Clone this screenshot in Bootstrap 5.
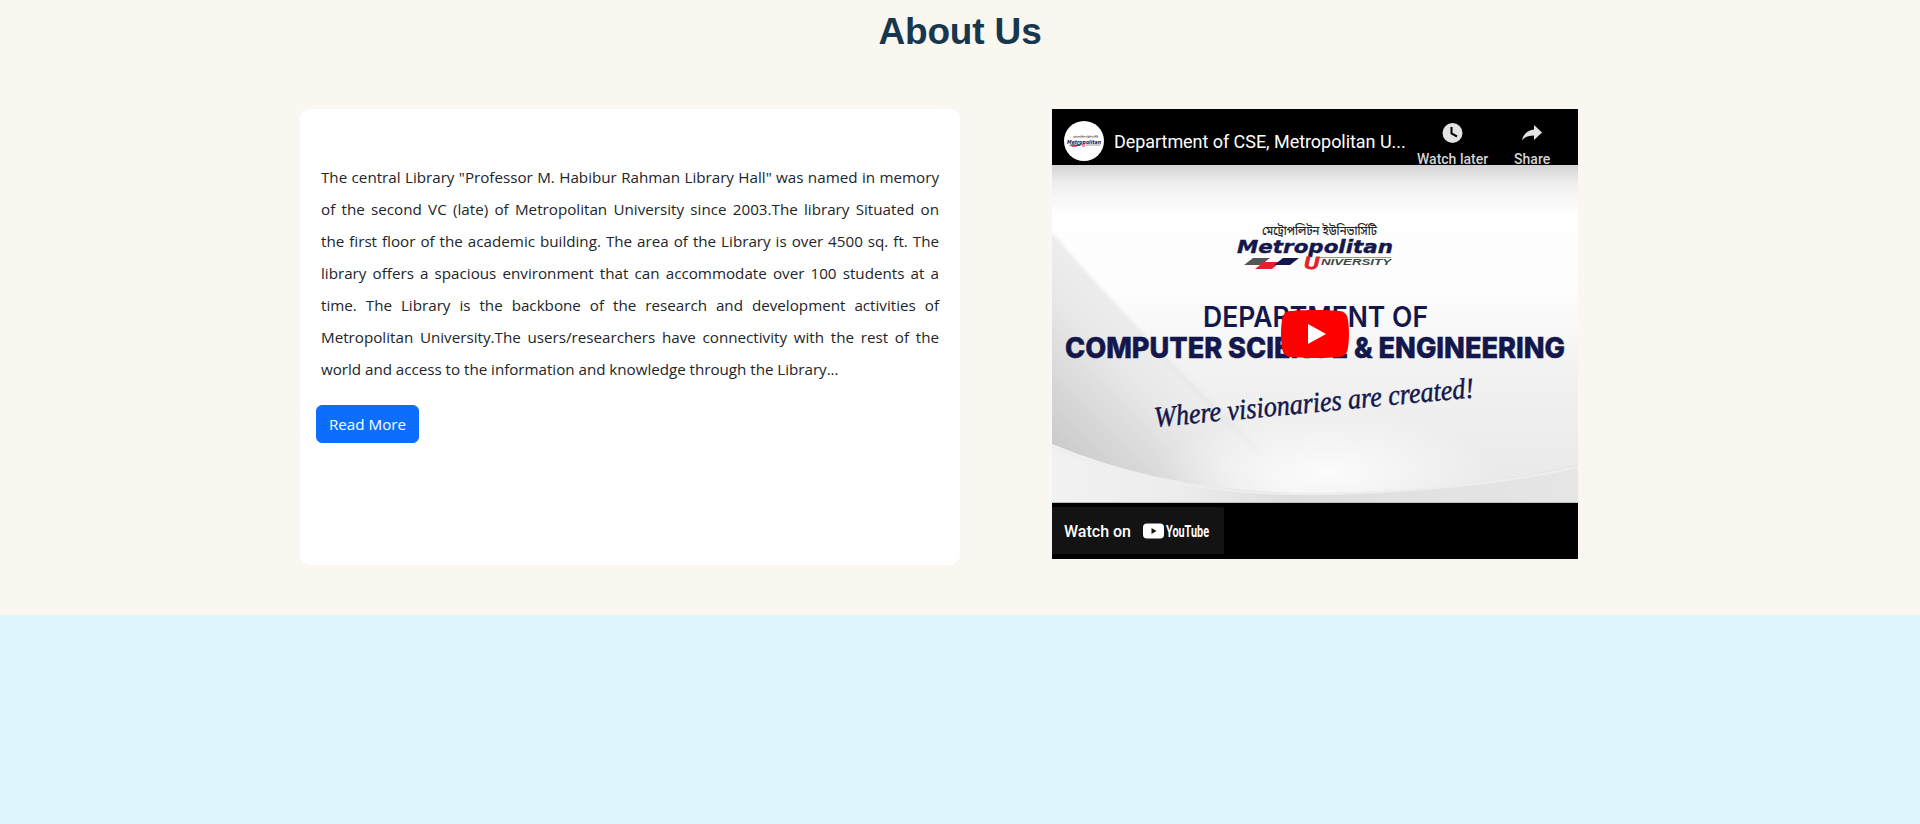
<!DOCTYPE html>
<html lang="en">
<head>
<meta charset="utf-8">
<meta name="viewport" content="width=device-width, initial-scale=1">
<title>About Us</title>
<link href="https://cdn.jsdelivr.net/npm/bootstrap@5.3.0/dist/css/bootstrap.min.css" rel="stylesheet">
<style>
body{background:#dff6ff;font-family:"Open Sans","Noto Sans",sans-serif;overflow:hidden}
.about{background:#faf7f0;height:615px}
.about h1{font:bold 37px/44px "Liberation Sans",Arial,sans-serif;letter-spacing:-.15px;color:#17374f;padding-top:10px;margin-bottom:55px}
.about-row{padding-left:300px;gap:92px}
.about-card{width:660px;height:456px;border-radius:10px;padding:52px 21px 0}
.about-card p{font-size:15.2px;line-height:32px;color:#212529;margin:0 0 20px}
.about-card p span{display:block;white-space:nowrap;text-align-last:justify}
.about-card p span:last-child{width:517px;letter-spacing:-.03px}
.about-card .btn{width:103px;height:38px;margin-left:-5px;font-size:15.2px;padding:7px 0}
.player{width:526px;height:450px;background:#000;font-family:Roboto,sans-serif;color:#eee}
.player-top{height:56px;overflow:hidden;padding-left:12px}
.avatar{margin-top:12px;flex:none}
.player-title{font-size:18px;line-height:24px;letter-spacing:-.05px;margin:21px 0 0 10px;width:292px;white-space:nowrap;color:#fff}
.player-act{font-size:14px;font-weight:500;line-height:16px;color:#d5d5d5;padding-top:12px;white-space:nowrap}
.player-act svg{display:block;margin:0 auto 6px}
.thumb{display:block;height:338px}
.watch-on{width:172px;height:47px;margin-top:4px;background:#131313;border-radius:0 2px 2px 0;padding:2px 0 0 12px;font-size:16px;font-weight:500;color:#fff}
.watch-on svg{margin:-1px 0 0 12px}
</style>
</head>
<body>
<section class="about">
  <h1 class="text-center">About Us</h1>
  <div class="about-row d-flex align-items-start">
    <div class="about-card bg-white">
      <p><span>The central Library "Professor M. Habibur Rahman Library Hall" was named in memory</span>
      <span>of the second VC (late) of Metropolitan University since 2003.The library Situated on</span>
      <span>the first floor of the academic building. The area of the Library is over 4500 sq. ft. The</span>
      <span>library offers a spacious environment that can accommodate over 100 students at a</span>
      <span>time. The Library is the backbone of the research and development activities of</span>
      <span>Metropolitan University.The users/researchers have connectivity with the rest of the</span>
      <span>world and access to the information and knowledge through the Library...</span></p>
      <a href="#" class="btn btn-primary">Read More</a>
    </div>
    <div class="player">
      <div class="player-top d-flex align-items-start">
        <svg class="avatar" width="40" height="40" viewBox="0 0 40 40">
          <circle cx="20" cy="20" r="20" fill="#fff"/>
          <text x="9" y="17" font-family="Noto Sans Bengali,FreeSans,sans-serif" font-size="3" fill="#333" textLength="25" lengthAdjust="spacingAndGlyphs">মেট্রোপলিটন ইউনিভার্সিটি</text>
          <text x="3" y="22.500" font-family="DejaVu Sans" font-weight="bold" font-style="italic" font-size="5.500" fill="#14174b" textLength="34" lengthAdjust="spacingAndGlyphs">Metropolitan</text>
          <path d="M7 23.300h5l-2 1.500H5z" fill="#555"/><path d="M9 24.300h5l-2 1.400H7z" fill="#e51f2b"/><path d="M13 23.300h5l-2 1.500h-5z" fill="#14174b"/>
          <text x="18" y="25.500" font-family="Liberation Sans" font-weight="bold" font-size="4" fill="#e51f2b">U</text>
          <path d="M21.500 24h15" stroke="#999" stroke-width="1"/>
        </svg>
        <div class="player-title">Department of CSE, Metropolitan U...</div>
        <div class="player-act" style="margin-left:11px">
          <svg width="24" height="24" viewBox="0 0 24 24"><circle cx="11.500" cy="12" r="10" fill="#e3e3e3"/><path d="M10.500 6v6.500l5.500 3" fill="none" stroke="#000" stroke-width="2"/></svg>
          <div>Watch later</div>
        </div>
        <div class="player-act" style="margin-left:26px">
          <svg width="24" height="24" viewBox="0 0 24 24"><path d="M14 8.500V4l8 7.500-8 7.500v-4.400C8.500 14.600 4.500 16 2 19.500c.8-5 4.500-10 12-11z" fill="#e3e3e3"/></svg>
          <div>Share</div>
        </div>
      </div>
      <svg class="thumb" width="526" height="338" viewBox="0 0 526 338">
        <defs>
          <linearGradient id="paper" x1="0" y1="0" x2="0" y2="1"><stop offset="0" stop-color="#fff"/><stop offset=".38" stop-color="#fdfdfd"/><stop offset=".6" stop-color="#f2f2f2"/><stop offset="1" stop-color="#e8e8e8"/></linearGradient>
          <linearGradient id="foldA" gradientUnits="userSpaceOnUse" x1="20" y1="290" x2="150" y2="165"><stop offset="0" stop-color="#cdcdcd"/><stop offset=".55" stop-color="#e8e8e8"/><stop offset="1" stop-color="#f2f2f2"/></linearGradient>
          <linearGradient id="shade" x1="0" y1="0" x2="0" y2="1"><stop offset="0" stop-opacity=".17"/><stop offset=".4" stop-opacity=".06"/><stop offset="1" stop-opacity="0"/></linearGradient>
          <radialGradient id="glow"><stop offset="0" stop-color="#fff" stop-opacity=".85"/><stop offset="1" stop-color="#fff" stop-opacity="0"/></radialGradient>
          <linearGradient id="foldB" x1="0" y1="0" x2="1" y2="0"><stop offset="0" stop-color="#f2f2f2"/><stop offset=".25" stop-color="#ececec"/><stop offset=".45" stop-color="#dedede"/><stop offset="1" stop-color="#e6e6e6"/></linearGradient>
          <filter id="soft" x="-10%" y="-10%" width="120%" height="120%"><feGaussianBlur stdDeviation="2"/></filter>
        </defs>
        <rect width="526" height="338" fill="url(#paper)"/>
        <path d="M-5 65Q80 165 210 290L280 345H-5z" fill="url(#foldA)" filter="url(#soft)"/>
        <path d="M0 70Q80 165 210 290" fill="none" stroke="#dadada" stroke-width="1.500" filter="url(#soft)"/>
        <ellipse cx="275" cy="308" rx="170" ry="62" fill="url(#glow)"/>
        <path d="M-5 277Q120 330 270 328T531 298V345H-5z" fill="url(#foldB)"/>
        <path d="M-5 280Q120 332 270 329T531 301" fill="none" stroke="#eee" stroke-width="2"/>
        <path d="M0 337.500h526" stroke="#b9c0be" stroke-width="1"/>
        <rect width="526" height="48" fill="url(#shade)"/>
        <text x="210" y="70" font-family="Noto Sans Bengali,FreeSans,sans-serif" font-size="13" font-weight="500" fill="#222" textLength="115" lengthAdjust="spacingAndGlyphs">মেট্রোপলিটন ইউনিভার্সিটি</text>
        <text x="185" y="88" font-family="DejaVu Sans" font-weight="bold" font-style="italic" font-size="18.500" fill="#14174b" stroke="#14174b" stroke-width=".4" textLength="156" lengthAdjust="spacingAndGlyphs">Metropolitan</text>
        <path d="M201 93h17l-9 7h-17z" fill="#555"/><path d="M212 97h16l-8 7h-17z" fill="#e51f2b"/><path d="M231 93h16l-9 7h-16z" fill="#14174b"/>
        <text x="252" y="104" font-family="Liberation Sans" font-weight="bold" font-style="italic" font-size="16" fill="#e51f2b" stroke="#e51f2b" stroke-width=".8" textLength="15" lengthAdjust="spacingAndGlyphs">U</text>
        <path d="M268 92.500h71" stroke="#e2757a" stroke-width="1"/>
        <text x="269" y="100" font-family="Liberation Sans" font-weight="bold" font-style="italic" font-size="8.500" fill="#444" textLength="70" lengthAdjust="spacingAndGlyphs">NIVERSITY</text>
        <g fill="#14174b">
          <text x="151" y="161.500" font-family="Inter" font-weight="600" font-size="28" textLength="225" lengthAdjust="spacingAndGlyphs">DEPARTMENT OF</text>
          <text x="13" y="192.500" font-family="Inter" font-weight="800" font-size="28.500" textLength="500" lengthAdjust="spacingAndGlyphs" stroke="#14174b" stroke-width=".5">COMPUTER SCIENCE &amp; ENGINEERING</text>
          <text transform="translate(103 262) rotate(-5.300)" font-family="'Liberation Serif',serif" font-style="italic" font-size="29" stroke="#14174b" stroke-width=".5" textLength="321" lengthAdjust="spacingAndGlyphs">Where visionaries are created!</text>
        </g>
        <g transform="translate(229 145)"><path fill="#f00" d="M66.520 7.740c-.78-2.930-2.490-5.410-5.420-6.190C55.790.13 34 0 34 0S12.210.13 6.900 1.550C3.970 2.330 2.270 4.810 1.480 7.740.06 13.050 0 24 0 24s.06 10.950 1.480 16.260c.78 2.930 2.490 5.410 5.420 6.190C12.210 47.870 34 48 34 48s21.790-.13 27.100-1.550c2.930-.78 4.640-3.260 5.420-6.190C67.940 34.950 68 24 68 24s-.06-10.950-1.480-16.260z"/><path fill="#fff" d="M45 24 27 14v20z"/></g>
      </svg>
      <div class="watch-on d-flex align-items-center">Watch on
        <svg width="67" height="18" viewBox="0 0 67 18"><rect y="1.500" width="21" height="15" rx="4" fill="#fff"/><path d="M8.500 6v6l5-3z" fill="#131313"/><text x="23" y="14.500" font-family="Roboto" font-weight="bold" font-size="16.500" fill="#fff" textLength="43" lengthAdjust="spacingAndGlyphs">YouTube</text></svg>
      </div>
    </div>
  </div>
</section>
<script src="https://cdn.jsdelivr.net/npm/bootstrap@5.3.0/dist/js/bootstrap.bundle.min.js"></script>
</body>
</html>
